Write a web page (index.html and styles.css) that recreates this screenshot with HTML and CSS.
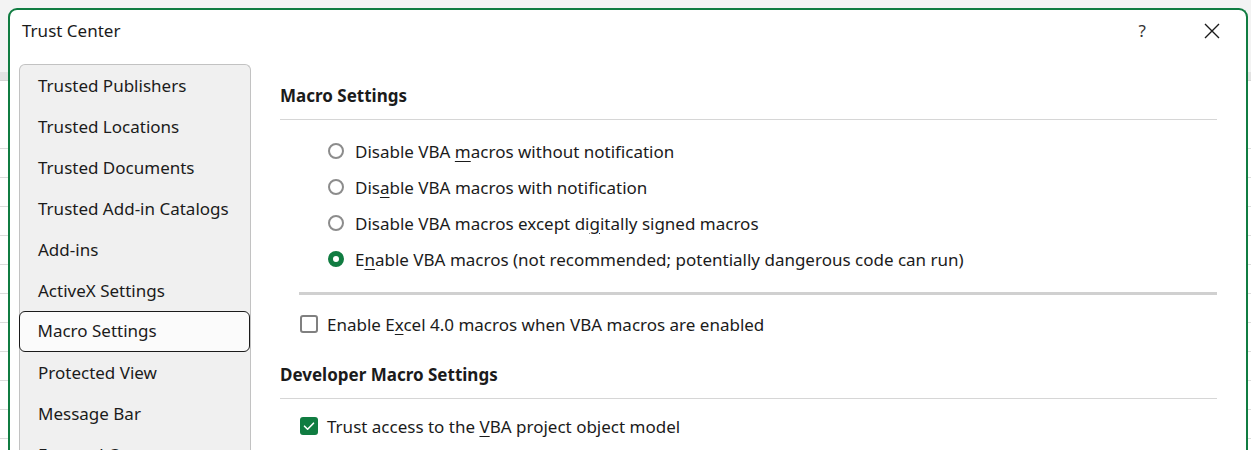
FILE: index.html
```html
<!DOCTYPE html>
<html>
<head>
<meta charset="utf-8">
<title>Trust Center</title>
<link rel="stylesheet" href="styles.css">
</head>
<body>
<div class="dialog">
  <div class="titlebar">
    <div class="title">Trust Center</div>
    <div class="title-actions">
      <span class="help">?</span>
      <svg class="close" width="16" height="16" viewBox="0 0 16 16"><path d="M1 1 L15 15 M15 1 L1 15" stroke="#1a1a1a" stroke-width="1.4" fill="none"/></svg>
    </div>
  </div>
  <div class="body">
    <nav class="nav">
      <div class="nav-item">Trusted Publishers</div>
      <div class="nav-item">Trusted Locations</div>
      <div class="nav-item">Trusted Documents</div>
      <div class="nav-item">Trusted Add-in Catalogs</div>
      <div class="nav-item">Add-ins</div>
      <div class="nav-item">ActiveX Settings</div>
      <div class="nav-item selected">Macro Settings</div>
      <div class="nav-item">Protected View</div>
      <div class="nav-item">Message Bar</div>
      <div class="nav-item">External Content</div>
    </nav>
    <main class="content">
      <h2 class="section-title">Macro Settings</h2>
      <div class="radio-list">
        <div class="option"><span class="radio"></span><span>Disable VBA <u>m</u>acros without notification</span></div>
        <div class="option"><span class="radio"></span><span>Dis<u>a</u>ble VBA macros with notification</span></div>
        <div class="option"><span class="radio"></span><span>Disable VBA macros except di<u>g</u>itally signed macros</span></div>
        <div class="option"><span class="radio checked"></span><span>E<u>n</u>able VBA macros (not recommended; potentially dangerous code can run)</span></div>
      </div>
      <div class="separator"></div>
      <div class="option check-row"><span class="checkbox"></span><span>Enable E<u>x</u>cel 4.0 macros when VBA macros are enabled</span></div>
      <h2 class="section-title dev">Developer Macro Settings</h2>
      <div class="option check-row trust"><span class="checkbox checked"><svg width="18" height="18" viewBox="0 0 18 18"><path d="M4.5 9.2 L7.6 12.2 L13.5 6.2" stroke="#fff" stroke-width="1.6" fill="none" stroke-linecap="round" stroke-linejoin="round"/></svg></span><span>Trust access to the <u>V</u>BA project object model</span></div>
    </main>
  </div>
</div>
</body>
</html>
```
FILE: styles.css
```css
html, body {
  margin: 0;
  height: 450px;
  overflow: hidden;
}
body {
  padding: 8px 0 0 8px;
  box-sizing: border-box;
  font-family: "Segoe UI", "Noto Sans", sans-serif;
  color: #1b1b1b;
  background-color: #ffffff;
  background-image:
    linear-gradient(#f3f3f3, #f3f3f3),
    linear-gradient(#e3e3e3, #e3e3e3),
    linear-gradient(#d4d4d4, #d4d4d4),
    linear-gradient(#ffffff, #ffffff),
    linear-gradient(to bottom, transparent 0 28px, #dcdcdc 28px 29px);
  background-size: 100% 72px, 100% 8px, 100% 1px, 100% 39px, 100% 29px;
  background-position: 0 0, 0 72px, 0 80px, 0 81px, 0 91px;
  background-repeat: no-repeat, no-repeat, no-repeat, no-repeat, repeat;
}
.dialog {
  width: 1240px;
  height: 460px;
  box-sizing: border-box;
  border: 2px solid #107c41;
  border-bottom: none;
  border-radius: 9px 9px 0 0;
  background: #ffffff;
  display: flex;
  flex-direction: column;
}
.titlebar {
  height: 54px;
  display: flex;
  align-items: flex-start;
  justify-content: space-between;
  flex: none;
}
.title {
  font-size: 17px;
  line-height: 24px;
  padding: 9px 0 0 12px;
}
.title-actions {
  display: flex;
  align-items: center;
  padding-top: 11px;
}
.help {
  font-size: 17px;
  line-height: 20px;
  color: #333;
  margin-right: 58px;
}
.close {
  margin-right: 26px;
}
.body {
  display: flex;
  flex: 1;
  min-height: 0;
}
.nav {
  width: 230px;
  margin-left: 9px;
  flex: none;
  background: #f0f0f0;
  border: 1px solid #c2c2c2;
  border-bottom: none;
  border-radius: 6px 6px 0 0;
  display: flex;
  flex-direction: column;
}
.nav-item {
  height: 41px;
  line-height: 41px;
  padding-left: 19px;
  font-size: 17px;
  flex: none;
  box-sizing: border-box;
  margin: 0 -1px;
  white-space: nowrap;
}
.nav-item.selected {
  background: #fbfbfb;
  border: 1.5px solid #1b1b1b;
  border-radius: 6px;
  line-height: 38px;
  padding-left: 17.5px;
  margin: 0 0 0 -1px;
}
.content {
  flex: 1;
  margin: 0 29px 0 29px;
  min-width: 0;
}
.section-title {
  margin: 0;
  font-size: 17px;
  font-weight: 700;
  line-height: 24px;
  padding: 20px 0 11px;
  border-bottom: 1px solid #d6d6d6;
}
.section-title.dev {
  padding-top: 21px;
}
.radio-list {
  margin-top: 13px;
  padding-left: 48px;
}
.option {
  height: 36px;
  display: flex;
  align-items: center;
  font-size: 17px;
}
.option u {
  text-decoration-thickness: 1px;
  text-underline-offset: 3px;
}
.radio {
  width: 16px;
  height: 16px;
  box-sizing: border-box;
  border: 2px solid #8c8c8c;
  border-radius: 50%;
  margin-right: 11px;
  flex: none;
}
.radio.checked {
  border: 5px solid #107c41;
  background: #fff;
}
.separator {
  height: 3px;
  background: #d0d0d0;
  margin: 15px 0 0 19px;
}
.check-row {
  margin-top: 11px;
  padding-left: 20px;
}
.checkbox {
  width: 18px;
  height: 18px;
  box-sizing: border-box;
  border: 2px solid #808080;
  border-radius: 3px;
  margin-right: 9px;
  flex: none;
  display: flex;
}
.checkbox.checked {
  border: none;
  background: #107c41;
}
.trust {
  margin-top: 9px;
}
```
